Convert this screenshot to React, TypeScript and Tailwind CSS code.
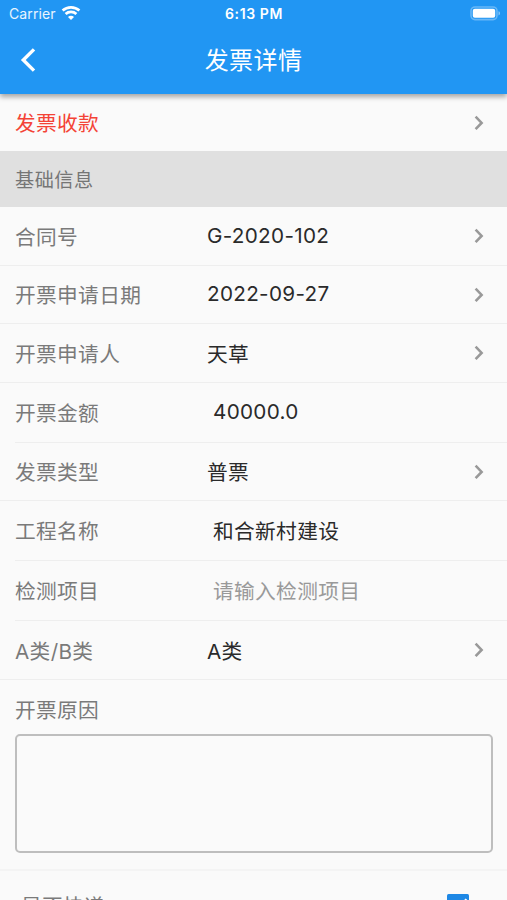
import React from 'react';

interface Field {
    label: string;
    value: string;
    // Height of the row, with its bottom divider included
    heightClass: string;
    editable?: boolean;
    placeholder?: boolean;
    latin?: boolean;
}

const fields: Field[] = [
    { label: '合同号', value: 'G-2020-102', heightClass: 'h-[59px]', latin: true },
    { label: '开票申请日期', value: '2022-09-27', heightClass: 'h-[58px]', latin: true },
    { label: '开票申请人', value: '天草', heightClass: 'h-[59px]' },
    { label: '开票金额', value: '40000.0', heightClass: 'h-[60px]', editable: true, latin: true },
    { label: '发票类型', value: '普票', heightClass: 'h-[58px]' },
    { label: '工程名称', value: '和合新村建设', heightClass: 'h-[60px]', editable: true },
    { label: '检测项目', value: '请输入检测项目', heightClass: 'h-[60px]', editable: true, placeholder: true },
    { label: 'A类/B类', value: 'A类', heightClass: 'h-[59px]' },
];

const ChevronRight: React.FC = () => (
    <svg width="10" height="16" viewBox="0 0 10 16" fill="none" className="shrink-0">
        <path d="M1.6 1.7L7.6 7.9L1.6 14.1" stroke="#999999" strokeWidth="2.6" />
    </svg>
);

const WifiIcon: React.FC = () => (
    <svg width="20" height="15" viewBox="0 0 20 15" fill="none">
        <path d="M1.6 4.6C6.3 .3 13.7 .3 18.4 4.6" stroke="white" strokeWidth="2.7" />
        <path d="M4.6 8C7.6 5.2 12.4 5.2 15.4 8" stroke="white" strokeWidth="2.7" />
        <path d="M7 10.9C8.6 9.3 11.4 9.3 13 10.9L10 14Z" fill="white" />
    </svg>
);

const BatteryIcon: React.FC = () => (
    <svg width="32" height="15" viewBox="0 0 32 15" fill="none">
        <rect x="1" y="1" width="26" height="12.6" rx="4" stroke="white" strokeOpacity=".32" strokeWidth="1.6" />
        <rect x="2.8" y="2.8" width="22.4" height="9" rx="2" fill="white" />
        <path d="M28.5 5.2C30.6 5.9 30.6 8.7 28.5 9.4Z" fill="white" fillOpacity=".45" />
    </svg>
);

const Header: React.FC = () => (
    <header className="relative z-10 h-[94px] shrink-0 bg-[#2196f3] text-white shadow-[0_3px_5px_rgba(0,0,0,0.34)]">
        <div className="grid h-[27px] grid-cols-3 items-center pl-[9px] pr-[5px]">
            <div className="flex items-center gap-[5px] text-[14px] tracking-[0.1px] text-white/90">
                <span>Carrier</span>
                <WifiIcon />
            </div>
            <span className="pr-[3px] pt-px text-center text-[14px] font-semibold tracking-[0.6px]">6:13 PM</span>
            <div className="flex justify-end">
                <BatteryIcon />
            </div>
        </div>
        <div className="grid h-[66px] grid-cols-[60px_1fr_60px] items-center">
            <svg width="16" height="26" viewBox="0 0 16 26" fill="none" className="ml-5">
                <path d="M14 2.4L3.3 13L14 23.6" stroke="white" strokeWidth="3.4" />
            </svg>
            <h1 className="pt-[2px] text-center text-[24px] tracking-[0.4px]">发票详情</h1>
        </div>
    </header>
);

const FieldRow: React.FC<{ field: Field }> = ({ field }) => (
    <div className={field.editable ? 'pl-[15px]' : ''}>
        <div
            className={`flex items-center border-b border-[#eeeeee] pr-[23px] ${field.heightClass} ${field.editable ? '' : 'pl-[15px]'}`}
        >
            <span className="w-[192px] shrink-0 pt-[4px] text-[#7a7a7a]">{field.label}</span>
            <span
                className={`flex-1 ${field.latin ? 'tracking-[0.3px]' : 'pt-[4px]'} ${field.editable ? 'pl-[6px]' : ''} ${field.placeholder ? 'text-[#999999]' : 'text-[#2a2a2a]'}`}
            >
                {field.value}
            </span>
            {!field.editable && <ChevronRight />}
        </div>
    </div>
);

const App: React.FC = () => (
    <div className="flex h-[900px] w-[507px] flex-col overflow-hidden bg-[#fafafa] font-['Inter','Noto_Sans_CJK_SC',sans-serif] text-[20.7px] leading-none tracking-[0.35px]">
        <Header />
        <div className="flex h-[57px] shrink-0 items-center justify-between pl-[15px] pr-[23px] text-[#f44336]">
            <span className="pt-[3px]">发票收款</span>
            <ChevronRight />
        </div>
        <div className="flex h-[56px] shrink-0 items-center bg-[#e0e0e0] pl-[15px] pt-[4px] text-[19.2px] tracking-[0.5px] text-[#757575]">
            基础信息
        </div>

        {fields.map(field => (
            <FieldRow key={field.label} field={field} />
        ))}

        <section className="h-[191px] shrink-0 border-b-2 border-[#f4f4f4] pl-[15px] pr-[14px] pt-[21px]">
            <label htmlFor="reason" className="block h-[33px] text-[#7a7a7a]">开票原因</label>
            <textarea
                id="reason"
                className="block h-[119px] w-full resize-none rounded-[5px] border-2 border-[#bebebe] bg-transparent p-3 outline-none"
            />
        </section>

        <div className="flex shrink-0 items-start justify-between pl-[21px] pr-[38px] pt-[23px]">
            <span className="pt-[3px] text-[#7a7a7a]">是否快递</span>
            <svg width="22" height="22" viewBox="0 0 22 22" fill="none">
                <rect width="22" height="22" rx="1.5" fill="#1e88e5" />
                <path d="M3 11L9 17L19.5 5.2" stroke="white" strokeWidth="2.4" />
            </svg>
        </div>
    </div>
);

export default App;
